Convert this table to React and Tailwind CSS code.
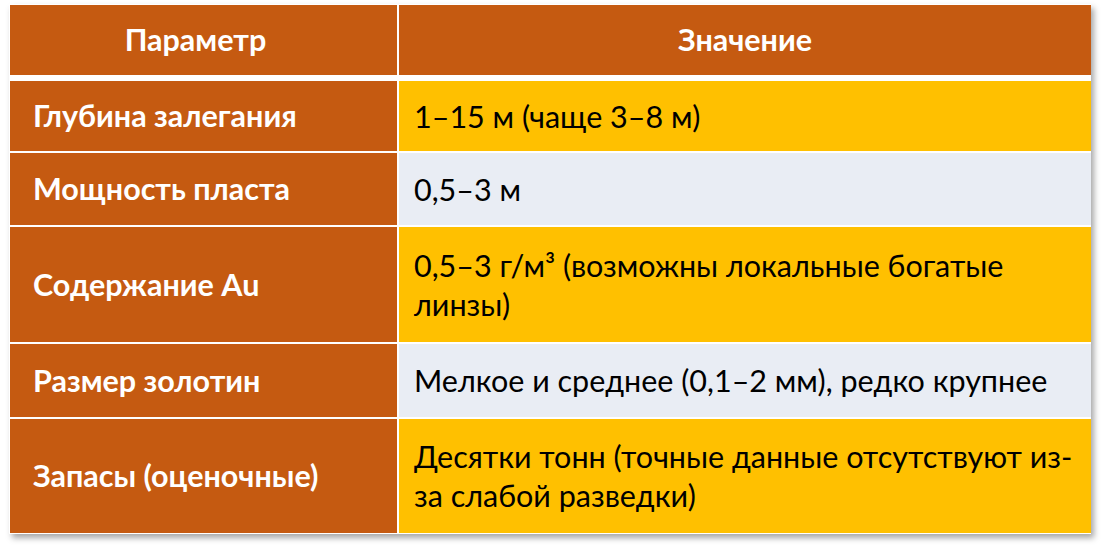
import React from "react";

// params table, orange / yellow office style

const rows = [
  { name: "Глубина залегания", value: ["1–15 м (чаще 3–8 м)"], h: "h-[70px]", bg: "bg-[#ffc000]" },
  { name: "Мощность пласта", value: ["0,5–3 м"], h: "h-[72px]", bg: "bg-[#e9edf4]" },
  {
    name: "Содержание Au",
    value: ["0,5–3 г/м³ (возможны локальные богатые", "линзы)"],
    h: "h-[115px]",
    bg: "bg-[#ffc000]",
  },
  { name: "Размер золотин", value: ["Мелкое и среднее (0,1–2 мм), редко крупнее"], h: "h-[73px]", bg: "bg-[#e9edf4]" },
  {
    name: "Запасы (оценочные)",
    value: ["Десятки тонн (точные данные отсутствуют из-", "за слабой разведки)"],
    h: "h-[114px]",
    bg: "bg-[#ffc000]",
  },
];

const App = () => {
  return (
    <div className="w-[1104px] h-[551px] bg-white pt-[4px] pl-[9px] font-['Lato','Open_Sans',sans-serif]">
      <div className="w-[1082px] bg-white p-px shadow-[3px_4px_6px_rgba(0,0,0,0.35)] flex flex-col gap-[2px]">
        <div className="grid grid-cols-[387px_692px] gap-x-[2px] h-[70px] mb-[4px]">
          <div className="bg-[#c55a11] text-white font-bold text-[30.5px] flex items-center justify-center pr-[16px]">Параметр</div>
          <div className="bg-[#c55a11] text-white font-bold text-[30.5px] flex items-center justify-center">Значение</div>
        </div>
        {rows.map((r) => (
          <div key={r.name} className={`grid grid-cols-[387px_692px] gap-x-[2px] ${r.h}`}>
            <div className="bg-[#c55a11] text-white font-bold text-[30.5px] flex items-center pl-[23px]">{r.name}</div>
            <div className={`${r.bg} text-black text-[30.5px] leading-[39px] flex flex-col justify-center pl-[15px]`}>
              {r.value.map((line) => (
                <span key={line} className="whitespace-nowrap">{line}</span>
              ))}
            </div>
          </div>
        ))}
      </div>
    </div>
  );
};

export default App;
